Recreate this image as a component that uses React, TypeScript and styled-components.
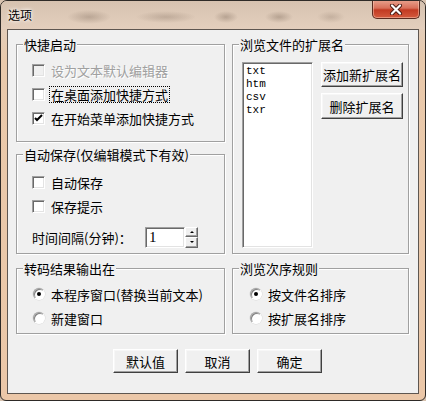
import React from 'react';
import styled, { createGlobalStyle } from 'styled-components';

const GlobalStyle = createGlobalStyle`
  html, body {
    margin: 0;
    padding: 0;
    background: #d8c3b0;
  }
  body {
    font-family: "Noto Sans CJK SC", "Liberation Sans", sans-serif;
    font-size: 13px;
    color: #000;
  }
`;

// Window chrome
const Window = styled.div`
  width: 426px;
  height: 401px;
  box-sizing: border-box;
  border: 1px solid #2e2a27;
  border-radius: 7px 7px 6px 6px;
  background: linear-gradient(to bottom, #dcc8b6 0px, #e3cdb9 28px, #e9c9ab 60px, #ebc7a8 100%);
  display: flex;
  flex-direction: column;
  overflow: hidden;
`;

const TitleBar = styled.div`
  height: 28px;
  display: flex;
  justify-content: space-between;
  align-items: flex-start;
  background:
    radial-gradient(ellipse 22px 7px at 88px 16px, rgba(120, 100, 85, 0.35), transparent),
    radial-gradient(ellipse 30px 6px at 165px 16px, rgba(120, 100, 85, 0.3), transparent),
    radial-gradient(ellipse 12px 6px at 225px 16px, rgba(110, 90, 75, 0.35), transparent),
    radial-gradient(ellipse 14px 6px at 278px 16px, rgba(110, 90, 75, 0.35), transparent),
    radial-gradient(ellipse 14px 6px at 330px 16px, rgba(120, 100, 85, 0.25), transparent),
    linear-gradient(to bottom, #d6c2b0, #e4cfbd);
`;

const Title = styled.span`
  padding: 7px 0 0 7px;
  font-size: 12px;
  line-height: 14px;
  text-shadow: 0 0 5px #fff, 0 0 3px #fff;
`;

const CloseButton = styled.div`
  width: 48px;
  height: 19px;
  margin: -1px 5px 0 0;
  box-sizing: border-box;
  border: 1px solid #5b2b20;
  border-top: none;
  border-radius: 0 0 5px 5px;
  background: linear-gradient(to bottom, #e9a38f 0%, #d9705a 45%, #c23a22 55%, #d45a3e 100%);
  box-shadow: inset 0 0 0 1px rgba(255, 220, 200, 0.45);
  display: flex;
  align-items: center;
  justify-content: center;
`;

const Client = styled.div`
  flex: 1;
  margin: 0 6px 6px;
  border: 1px solid #5e5650;
  background: #f0f0f0;
  padding: 14px 0 0 8px;
  display: flex;
  flex-direction: column;
`;

const Columns = styled.div`
  display: grid;
  grid-template-columns: 209px 177px;
  column-gap: 7px;
  align-items: start;
`;

const Column = styled.div`
  display: flex;
  flex-direction: column;
`;

// Group box
const Group = styled.div<{ $h: number; $mt?: number; $pl?: number; $pt?: number }>`
  position: relative;
  box-sizing: border-box;
  height: ${p => p.$h}px;
  margin-top: ${p => p.$mt || 0}px;
  border: 1px solid #a0a0a0;
  box-shadow: 1px 1px 0 #fff, inset 1px 1px 0 #fff;
  padding: ${p => p.$pt ?? 13}px 0 0 ${p => p.$pl ?? 15}px;
`;

const Legend = styled.span`
  position: absolute;
  top: -8px;
  left: 6px;
  padding: 0 1px;
  background: #f0f0f0;
  line-height: 15px;
  white-space: nowrap;
`;

const Row = styled.div`
  display: flex;
  align-items: center;
  height: 24px;
  gap: 6px;
  white-space: nowrap;
`;

const RowText = styled.span<{ $disabled?: boolean; $focus?: boolean }>`
  line-height: 15px;
  color: ${p => (p.$disabled ? '#a0a0a0' : '#000')};
  text-shadow: ${p => (p.$disabled ? '1px 1px 0 #fff' : 'none')};
  outline: ${p => (p.$focus ? '1px dotted #000' : 'none')};
  padding: 0 1px;
  margin-left: -1px;
`;

const CheckBox = styled.span<{ $disabled?: boolean }>`
  width: 13px;
  height: 13px;
  box-sizing: border-box;
  border: 1px solid;
  border-color: #a0a0a0 #fff #fff #a0a0a0;
  box-shadow: inset 1px 1px 0 #696969, inset -1px -1px 0 #e3e3e3;
  background: ${p => (p.$disabled ? '#f0f0f0' : '#fff')};
  display: flex;
  align-items: center;
  justify-content: center;
  flex-shrink: 0;
`;

const Radio = styled.span`
  width: 12px;
  height: 12px;
  box-sizing: border-box;
  border-radius: 50%;
  border: 1px solid;
  border-color: #a0a0a0 #fff #fff #a0a0a0;
  box-shadow: inset 1px 1px 0 #808080, 0 0 0 0.5px #d8d8d8;
  background: #fff;
  display: flex;
  align-items: center;
  justify-content: center;
  flex-shrink: 0;
  margin-left: 1px;
`;

const RadioDot = styled.span`
  width: 4px;
  height: 4px;
  border-radius: 50%;
  background: #000;
`;

// Interval spinner
const IntervalRow = styled.div`
  display: flex;
  align-items: center;
  margin-top: 8px;
  height: 22px;
`;

const IntervalLabel = styled.span`
  width: 113px;
  white-space: nowrap;
  line-height: 15px;
`;

const SpinInput = styled.div`
  width: 40px;
  height: 21px;
  box-sizing: border-box;
  border: 1px solid;
  border-color: #a0a0a0 #fff #fff #a0a0a0;
  box-shadow: inset 1px 1px 0 #696969, inset -1px -1px 0 #e3e3e3;
  background: #fff;
  font-family: "Liberation Serif", serif;
  font-size: 15px;
  line-height: 19px;
  padding-left: 3px;
`;

const SpinButtons = styled.div`
  display: flex;
  flex-direction: column;
  height: 21px;
`;

const SpinButton = styled.div`
  width: 13px;
  height: 10px;
  box-sizing: border-box;
  border: 1px solid;
  border-color: #fff #696969 #696969 #fff;
  box-shadow: inset -1px -1px 0 #a0a0a0;
  background: #f0f0f0;
  display: flex;
  align-items: center;
  justify-content: center;
  & + & {
    height: 11px;
  }
`;

const Arrow = styled.span<{ $down?: boolean }>`
  width: 0;
  height: 0;
  border-left: 2px solid transparent;
  border-right: 2px solid transparent;
  ${p => (p.$down ? 'border-top: 2px solid #000;' : 'border-bottom: 2px solid #000;')}
`;

// Extension list
const ExtBody = styled.div`
  display: flex;
  gap: 8px;
`;

const ListBox = styled.div`
  width: 71px;
  height: 186px;
  box-sizing: border-box;
  border: 1px solid;
  border-color: #a0a0a0 #fff #fff #a0a0a0;
  box-shadow: inset 1px 1px 0 #696969, inset -1px -1px 0 #e3e3e3;
  background: #fff;
  padding: 2px 3px;
  font-family: "Liberation Mono", monospace;
  font-size: 11px;
  line-height: 13px;
`;

const ButtonStack = styled.div`
  display: flex;
  flex-direction: column;
  gap: 6px;
`;

const Button = styled.button<{ $w: number; $h: number }>`
  width: ${p => p.$w}px;
  height: ${p => p.$h}px;
  box-sizing: border-box;
  padding: 0;
  border: 1px solid;
  border-color: #fff #404040 #404040 #fff;
  box-shadow: inset -1px -1px 0 #a0a0a0, inset 1px 1px 0 #f7f7f7;
  background: #f0f0f0;
  font-family: "Noto Sans CJK SC", "Liberation Sans", sans-serif;
  font-size: 13px;
  color: #000;
  white-space: nowrap;
`;

const ButtonRow = styled.div`
  display: flex;
  gap: 7px;
  margin-top: 15px;
  padding-left: 97px;
`;

const Check = () => (
  <svg width="9" height="9" viewBox="0 0 9 9">
    <path d="M1 4 L3 6 L8 1" fill="none" stroke="#000" strokeWidth="2" />
  </svg>
);

const CloseGlyph = () => (
  <svg width="14" height="11" viewBox="0 0 14 11">
    <path d="M3 1.5 L11 9.5 M11 1.5 L3 9.5" stroke="#4a1a12" strokeWidth="4" strokeLinecap="round" />
    <path d="M3 1.5 L11 9.5 M11 1.5 L3 9.5" stroke="#fff" strokeWidth="2.2" strokeLinecap="round" />
  </svg>
);

const App: React.FC = () => {
  const extensions = ['txt', 'htm', 'csv', 'txr'];

  return (
    <>
      <GlobalStyle />
      <Window>
        <TitleBar>
          <Title>选项</Title>
          <CloseButton>
            <CloseGlyph />
          </CloseButton>
        </TitleBar>
        <Client>
          <Columns>
            <Column>
              <Group $h={98}>
                <Legend>快捷启动</Legend>
                <Row>
                  <CheckBox $disabled />
                  <RowText $disabled>设为文本默认编辑器</RowText>
                </Row>
                <Row>
                  <CheckBox />
                  <RowText $focus>在桌面添加快捷方式</RowText>
                </Row>
                <Row>
                  <CheckBox>
                    <Check />
                  </CheckBox>
                  <RowText>在开始菜单添加快捷方式</RowText>
                </Row>
              </Group>

              <Group $h={100} $mt={12} $pt={15}>
                <Legend>自动保存(仅编辑模式下有效)</Legend>
                <Row>
                  <CheckBox />
                  <RowText>自动保存</RowText>
                </Row>
                <Row>
                  <CheckBox />
                  <RowText>保存提示</RowText>
                </Row>
                <IntervalRow>
                  <IntervalLabel>时间间隔(分钟)：</IntervalLabel>
                  <SpinInput>1</SpinInput>
                  <SpinButtons>
                    <SpinButton>
                      <Arrow />
                    </SpinButton>
                    <SpinButton>
                      <Arrow $down />
                    </SpinButton>
                  </SpinButtons>
                </IntervalRow>
              </Group>

              <Group $h={66} $mt={14}>
                <Legend>转码结果输出在</Legend>
                <Row>
                  <Radio>
                    <RadioDot />
                  </Radio>
                  <RowText>本程序窗口(替换当前文本)</RowText>
                </Row>
                <Row>
                  <Radio />
                  <RowText>新建窗口</RowText>
                </Row>
              </Group>
            </Column>

            <Column>
              <Group $h={210} $pt={17} $pl={9}>
                <Legend>浏览文件的扩展名</Legend>
                <ExtBody>
                  <ListBox>
                    {extensions.map(ext => (
                      <div key={ext}>{ext}</div>
                    ))}
                  </ListBox>
                  <ButtonStack>
                    <Button $w={82} $h={25}>添加新扩展名</Button>
                    <Button $w={82} $h={26}>删除扩展名</Button>
                  </ButtonStack>
                </ExtBody>
              </Group>

              <Group $h={66} $mt={14} $pl={16}>
                <Legend>浏览次序规则</Legend>
                <Row>
                  <Radio>
                    <RadioDot />
                  </Radio>
                  <RowText>按文件名排序</RowText>
                </Row>
                <Row>
                  <Radio />
                  <RowText>按扩展名排序</RowText>
                </Row>
              </Group>
            </Column>
          </Columns>

          <ButtonRow>
            <Button $w={65} $h={24}>默认值</Button>
            <Button $w={65} $h={24}>取消</Button>
            <Button $w={65} $h={24}>确定</Button>
          </ButtonRow>
        </Client>
      </Window>
    </>
  );
};

export default App;
